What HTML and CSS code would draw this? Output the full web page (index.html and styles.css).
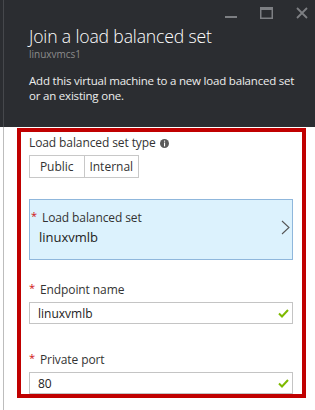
FILE: index.html
```html
<!DOCTYPE html>
<html lang="en">
<head>
  <meta charset="UTF-8">
  <title>Join a load balanced set</title>
  <link rel="stylesheet" href="styles.css">
</head>
<body>
  <header class="blade-head">
    <div class="controls">
      <svg width="12" height="12" viewBox="0 0 12 12"><rect x="0" y="9" width="12" height="2" fill="#7d7f83"/></svg>
      <svg width="13" height="12" viewBox="0 0 13 12"><rect x="0.75" y="1.5" width="11.5" height="9.75" fill="none" stroke="#7d7f83" stroke-width="1.5"/><rect x="0" y="0" width="13" height="3" fill="#7d7f83"/></svg>
      <svg width="12" height="12" viewBox="0 0 12 12"><path d="M1 1 L11 11 M11 1 L1 11" stroke="#7d7f83" stroke-width="1.8"/></svg>
    </div>
    <h1>Join a load balanced set</h1>
    <div class="sub">linuxvmcs1</div>
    <p class="desc">Add this virtual machine to a new load balanced set<br>or an existing one.</p>
  </header>

  <div class="blade-body">
    <div class="frame">
      <div class="label">Load balanced set type
        <svg class="info" width="9" height="9" viewBox="0 0 9 9"><circle cx="4.5" cy="4.5" r="4.5" fill="#5a5a5a"/><rect x="4" y="1.6" width="1.1" height="1.1" fill="#fff"/><rect x="4" y="3.5" width="1.1" height="3.9" fill="#fff"/></svg>
      </div>
      <div class="seg">
        <span class="seg-item">Public</span>
        <span class="seg-item">Internal</span>
      </div>

      <div class="picker">
        <div class="picker-text">
          <div class="label"><span class="req">*</span>Load balanced set</div>
          <div class="picker-value">linuxvmlb</div>
        </div>
        <svg class="chevron" width="9" height="15" viewBox="0 0 9 15"><path d="M1 1 L8 7.5 L1 14" fill="none" stroke="#555" stroke-width="1.1"/></svg>
      </div>

      <div class="field">
        <div class="label"><span class="req">*</span>Endpoint name</div>
        <div class="input">
          <span>linuxvmlb</span>
          <svg class="check" width="11" height="9" viewBox="0 0 11 9"><path d="M1 4.5 L4 7.5 L10 1" fill="none" stroke="#7fba00" stroke-width="2"/></svg>
        </div>
      </div>

      <div class="field">
        <div class="label"><span class="req">*</span>Private port</div>
        <div class="input">
          <span>80</span>
          <svg class="check" width="11" height="9" viewBox="0 0 11 9"><path d="M1 4.5 L4 7.5 L10 1" fill="none" stroke="#7fba00" stroke-width="2"/></svg>
        </div>
      </div>
    </div>
  </div>
</body>
</html>
```

FILE: styles.css
```css
:root {
  --dark: #2b2d31;
  --line-dark: #46484c;
  --line-light: #bdbdbd;
  --red: #c00000;
  --text: #333;
}
*, *::before, *::after { box-sizing: border-box; }
body {
  margin: 0;
  font-family: 'Open Sans', 'Noto Sans', sans-serif;
  color: var(--text);
  background: #fff;
}
.blade-head {
  height: 127px;
  padding-left: 29px;
  background: linear-gradient(90deg, var(--dark) 3px, var(--line-dark) 3px 4px, var(--dark) 4px);
  color: #fff;
}
.controls {
  display: flex;
  justify-content: flex-end;
  align-items: flex-start;
  gap: 23px;
  height: 25px;
  padding: 7px 7px 0 0;
}
h1 {
  margin: 0;
  font-size: 17.6px;
  font-weight: 300;
  line-height: 22px;
  letter-spacing: -0.15px;
}
.sub {
  font-size: 10px;
  line-height: 14px;
  color: #8c8c8c;
}
.desc {
  margin: 12px 0 0;
  font-size: 11.5px;
  line-height: 15px;
  color: #ededed;
  white-space: nowrap;
  letter-spacing: -0.2px;
}
.blade-body {
  min-height: 283px;
  padding: 1px 0 0 17px;
  background: linear-gradient(90deg, #fff 3px, var(--line-light) 3px 4px, #fff 4px);
}
.frame {
  width: 289px;
  border: 4px solid var(--red);
  padding: 3px 9px 0 8px;
}
.label {
  font-size: 12px;
  line-height: 16px;
  color: var(--text);
  letter-spacing: -0.1px;
}
.info { vertical-align: -1px; margin-left: 1px; }
.req {
  display: inline-block;
  width: 11px;
  color: #d01010;
  font-size: 11px;
  vertical-align: 2px;
}
.seg {
  display: flex;
  margin-top: 4px;
  width: 110px;
  height: 23px;
  border: 1px solid #c8c8c8;
}
.seg-item {
  flex: 1;
  display: flex;
  align-items: center;
  justify-content: center;
  font-size: 12px;
  color: var(--text);
}
.seg-item + .seg-item { border-left: 1px solid #c8c8c8; }
.picker {
  display: flex;
  align-items: center;
  justify-content: space-between;
  margin-top: 21px;
  height: 61px;
  padding: 0 2px 0 1px;
  background: #dcf2fd;
  border: 1px solid #8fb7dc;
}
.picker-text { margin-top: -6px; }
.picker-value {
  margin-top: 2px;
  padding-left: 8px;
  font-size: 13px;
  line-height: 18px;
  color: #222;
}
.chevron { margin-top: -4px; }
.field { margin-top: 20px; }
.field + .field { margin-top: 26px; }
.field .input { margin-top: 4px; }
.input {
  display: flex;
  align-items: center;
  justify-content: space-between;
  height: 22px;
  padding: 0 3px 0 8px;
  border: 1px solid #c4c4c4;
  font-size: 12px;
  color: #222;
}
```
